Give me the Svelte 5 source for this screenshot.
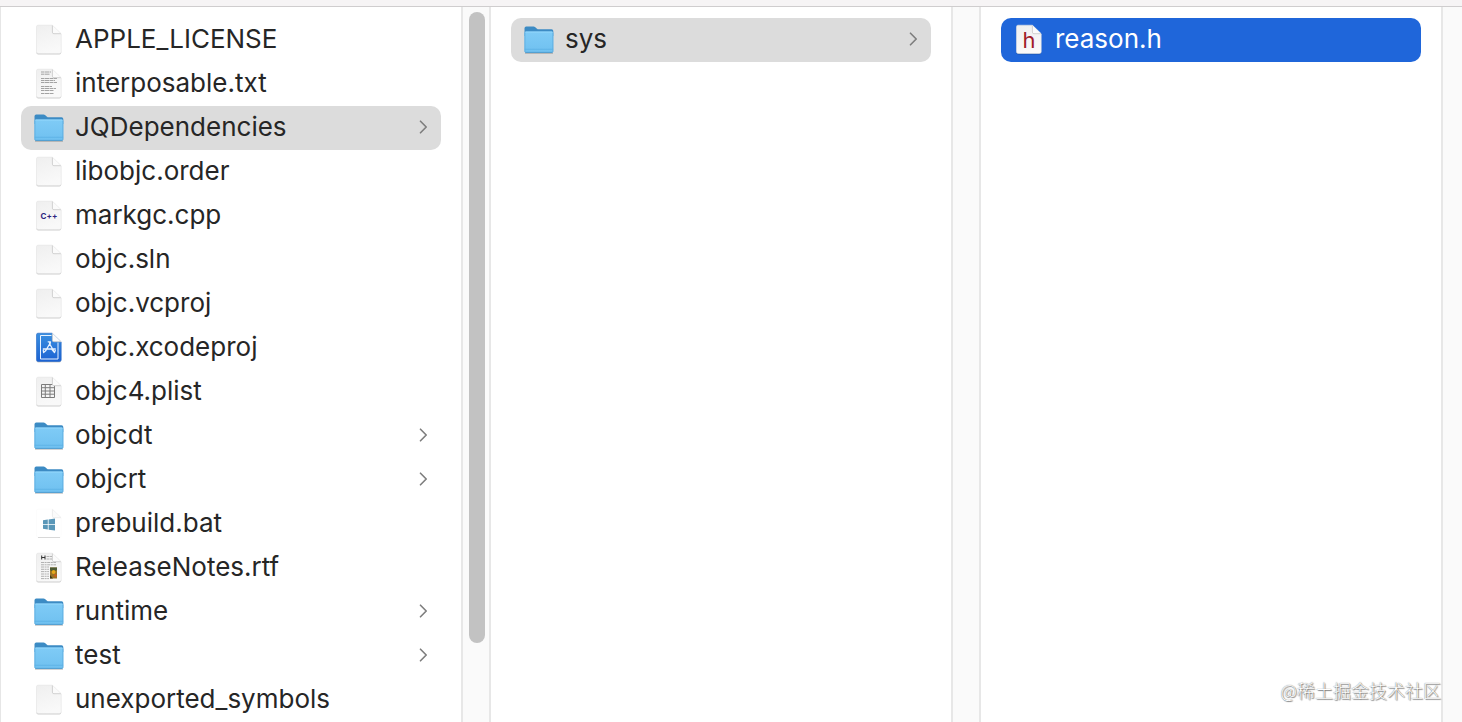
<script>
  const columns = [
    {
      label: 'Project',
      selected: 'JQDependencies',
      scroll: true,
      items: [
        { name: 'APPLE_LICENSE', kind: 'blank' },
        { name: 'interposable.txt', kind: 'text' },
        { name: 'JQDependencies', kind: 'folder' },
        { name: 'libobjc.order', kind: 'blank' },
        { name: 'markgc.cpp', kind: 'cpp' },
        { name: 'objc.sln', kind: 'blank' },
        { name: 'objc.vcproj', kind: 'blank' },
        { name: 'objc.xcodeproj', kind: 'xcode' },
        { name: 'objc4.plist', kind: 'plist' },
        { name: 'objcdt', kind: 'folder' },
        { name: 'objcrt', kind: 'folder' },
        { name: 'prebuild.bat', kind: 'bat' },
        { name: 'ReleaseNotes.rtf', kind: 'rtf' },
        { name: 'runtime', kind: 'folder' },
        { name: 'test', kind: 'folder' },
        { name: 'unexported_symbols', kind: 'blank' }
      ]
    },
    { label: 'JQDependencies', selected: 'sys', items: [{ name: 'sys', kind: 'folder' }] },
    { label: 'sys', selected: 'reason.h', active: true, items: [{ name: 'reason.h', kind: 'header' }] }
  ];
</script>

<svg class="defs" width="0" height="0" aria-hidden="true">
  <defs>
    <linearGradient id="paper" x1="0" y1="0" x2="0.3" y2="1">
      <stop offset="0" stop-color="#efefef" /><stop offset="1" stop-color="#f9f9f9" />
    </linearGradient>
    <linearGradient id="front" x1="0" y1="0" x2="0" y2="1">
      <stop offset="0" stop-color="#7fcbf6" /><stop offset="1" stop-color="#6fc0f0" />
    </linearGradient>
    <linearGradient id="blue" x1="0" y1="0" x2="0" y2="1">
      <stop offset="0" stop-color="#3a8fe0" /><stop offset="1" stop-color="#1c62d2" />
    </linearGradient>
  </defs>
</svg>

{#snippet icon(kind)}
  <svg class="icon" viewBox="0 0 32 32" aria-hidden="true">
    {#if kind === 'folder'}
      <path d="M2 28.500h28v1.300H2z" fill="#000" opacity=".22" />
      <path d="M1.500 4.200Q1.500 2.400 3.300 2.400H10.500q1 0 1.800.8l1.700 1.500q.6.500 1.500.500H28.500Q30.300 5.200 30.300 7V12H1.500z" fill="#3c8bc4" />
      <path d="M1.500 9Q1.500 7.500 3 7.500H28.800Q30.300 7.500 30.300 9V27Q30.300 28.800 28.500 28.800H3.300Q1.500 28.800 1.500 27z" fill="url(#front)" />
      <path d="M1.900 8.500V28M29.900 8.500V28" stroke="#5aaadd" stroke-width=".8" />
      <path d="M1.700 25.300H30.100" stroke="#5cb0e4" stroke-width=".8" />
      <path d="M2.200 28.400H29.600" stroke="#4797cc" stroke-width=".9" />
      <path d="M2.500 8H29.300" stroke="#9ddcff" stroke-width=".8" />
    {:else}
      <path d="M5.200 29H26.500Q28 29 28.200 27.500V28.700Q28.200 30.500 26.400 30.500H5.200Q3.400 30.500 3.400 28.700V27.500Q3.600 29 5.200 29z" fill="#000" opacity={kind === 'bat' ? 0 : 0.2} />
      <path
        d="M5 1.200H19.400L28.200 9.700V27.800Q28.200 29.500 26.500 29.500H5.200Q3.500 29.500 3.500 27.800V2.700Q3.500 1.200 5 1.200z"
        fill={kind === 'xcode' ? 'url(#blue)' : kind === 'bat' ? '#fff' : 'url(#paper)'}
        stroke={kind === 'xcode' ? '#2265c5' : kind === 'bat' ? '#fafafa' : '#e3e3e3'}
        stroke-width=".6"
      />
      {#if kind === 'bat'}<path d="M5 29.500H27" stroke="#d8d8d8" />{/if}
      {#if kind === 'text'}
        <path d="M8 4h10M8 6.200h9M8 10.500h16M8 12.500h14M8 14.500h16M8 18.500h11M8 20.500h15M8 22.500h13M8 25.500h13" stroke="#a3a3a3" stroke-width="1" stroke-dasharray="3 .5 5 .5" />
      {:else if kind === 'cpp'}
        <text x="16" y="18.500" text-anchor="middle" class="cpp">C++</text>
      {:else if kind === 'xcode'}
        <path d="M18.500 3.500H7.500V27H25V10.500" fill="none" stroke="#e8f2ff" stroke-width="1" />
        <g fill="none" stroke="#e8f2ff" stroke-width="1.300" stroke-linecap="round" stroke-linejoin="round">
          <path d="M15.200 9.800H17.400L17 12.500L21.500 20.300M16.800 9.800L16.600 12L12.600 18.800L10.600 20.500L10.300 18.500M10.300 17H22.300M19 17.500L21.500 20.500L22.300 18.500" />
        </g>
      {:else if kind === 'plist'}
        <path d="M8.500 8.500H21.500V21.500H8.500zM8.500 11.700H21.500M8.500 15H21.500M8.500 18.200H21.500M12.300 8.500V21.500M17 8.500V21.500" fill="none" stroke="#7c7c7c" stroke-width="1" />
      {:else if kind === 'bat'}
        <path d="M10 12.300L14.800 11.600V16.200H10zM15.600 11.500L22 10.600V16.200H15.600zM10 17H14.800V21.500L10 20.800zM15.600 17H22V22.600L15.600 21.700z" fill="#5a97b8" />
      {:else if kind === 'rtf'}
        <path d="M13.500 4.500H19M13.500 7H19M8 10.500H23M8 12.800H23M8 15H16M8 17.300H16M8 19.600H16M8 22H16M8 24.300H16M8 26.600H16" stroke="#a9a9a9" stroke-width=".9" stroke-dasharray="3 .6 2 .6" />
        <path d="M8.700 3.500V7.500M12 3.500V7.500M8.700 5.500H12" stroke="#333" stroke-width="1" />
        <path d="M17 15.500H24V26.500H17z" fill="#9a7426" />
        <path d="M17 15.500H24V18L20 20L17 18z" fill="#4c5a34" />
        <circle cx="20.600" cy="20" r="1.900" fill="#e8a91c" />
        <circle cx="22.400" cy="23.500" r="1.300" fill="#d25a1f" />
        <path d="M17 23L20 26.500H17z" fill="#3d3a1c" />
      {:else if kind === 'header'}
        <text x="16" y="23.500" text-anchor="middle" class="hdr">h</text>
      {/if}
      <path d="M19.200 .6L29 10V0H19.200z" fill={kind === 'header' ? '#1f66da' : '#fff'} />
      <path d="M19.400 1.200V8.200Q19.400 9.700 20.900 9.700H28.200z" fill="#fbfbfb" />
      <path d="M19.400 1.400V8.200Q19.400 9.700 20.900 9.700H28" fill="none" stroke={kind === 'bat' ? '#e8e8e8' : '#c6c6c6'} stroke-width=".8" />
      <path d="M19.400 1.200L28.200 9.700" stroke="#e6e6e6" stroke-width=".5" />
    {/if}
  </svg>
{/snippet}

<div class="window">
  <div class="strip"></div>
  <main class="browser">
    {#each columns as column}
      <ul class="pane" aria-label={column.label}>
        {#each column.items as item}
          <li>
            <button
              class="row"
              class:selected={item.name === column.selected}
              class:active={column.active && item.name === column.selected}
            >
              {@render icon(item.kind)}
              <span class="name">{item.name}</span>
              {#if item.kind === 'folder'}
                <svg class="chevron" viewBox="0 0 8 16" aria-hidden="true">
                  <path d="M1.500 1.200L7.200 7L1.500 12.800" fill="none" stroke="#7d7d7d" stroke-width="1.600" stroke-linecap="round" stroke-linejoin="round" />
                </svg>
              {/if}
            </button>
          </li>
        {/each}
      </ul>
      <div class="gutter">
        {#if column.scroll}<div class="thumb"></div>{/if}
      </div>
    {/each}
  </main>
  <div class="mark">@稀土掘金技术社区</div>
</div>

<style>
  :global(body) {
    margin: 0;
    background: #fff;
  }
  .defs {
    position: absolute;
  }
  .window {
    position: relative;
    display: flex;
    flex-direction: column;
    min-height: 100vh;
    font-family: Inter, 'Noto Sans', sans-serif;
  }
  .strip {
    height: 6px;
    background: #f6f4f5;
    border-bottom: 1px solid #cfcdce;
  }
  .browser {
    flex: 1;
    display: grid;
    grid-template-columns: 1fr 30px 1fr 30px 1fr 21px;
    border-left: 1px solid #e6e6e6;
  }
  .pane {
    list-style: none;
    margin: 0;
    padding: 11px 20px 0;
    min-width: 0;
  }
  .row {
    display: flex;
    align-items: center;
    gap: 10px;
    box-sizing: border-box;
    width: 100%;
    height: 44px;
    padding: 0 14px 0 12px;
    border: 0;
    border-radius: 10px;
    background: none;
    color: #262626;
    font: inherit;
    font-size: 26px;
    line-height: 32px;
    text-align: left;
  }
  .selected {
    background: #dcdcdc;
  }
  .active {
    background: #1f66da;
    color: #fff;
  }
  .icon {
    flex: none;
    width: 32px;
    height: 32px;
  }
  .name {
    flex: 1;
    min-width: 0;
    overflow: hidden;
    white-space: nowrap;
    text-overflow: ellipsis;
    padding-bottom: 2px;
  }
  .chevron {
    flex: none;
    width: 8px;
    height: 16px;
  }
  .cpp {
    font: 700 8px Inter, sans-serif;
    fill: #2d2580;
  }
  .hdr {
    font: 400 22px Inter, sans-serif;
    fill: #a01c28;
  }
  .gutter {
    display: flex;
    flex-direction: column;
    box-sizing: border-box;
    padding: 5px 4px 0 6px;
    border: solid #e7e7e7;
    border-width: 0 2px;
    background: #fafafa;
  }
  .gutter:last-child {
    border-right: 0;
  }
  .thumb {
    flex: 8;
    border-radius: 8px;
    background: #c2c2c2;
  }
  .gutter::after {
    content: '';
    flex: 1;
  }
  .mark {
    position: absolute;
    right: 21px;
    bottom: 19px;
    color: #fff;
    font: 300 18px/26px 'Noto Sans CJK SC', sans-serif;
    text-shadow: 0 0 1px #555, 1px 1px 1px #888;
  }
</style>
